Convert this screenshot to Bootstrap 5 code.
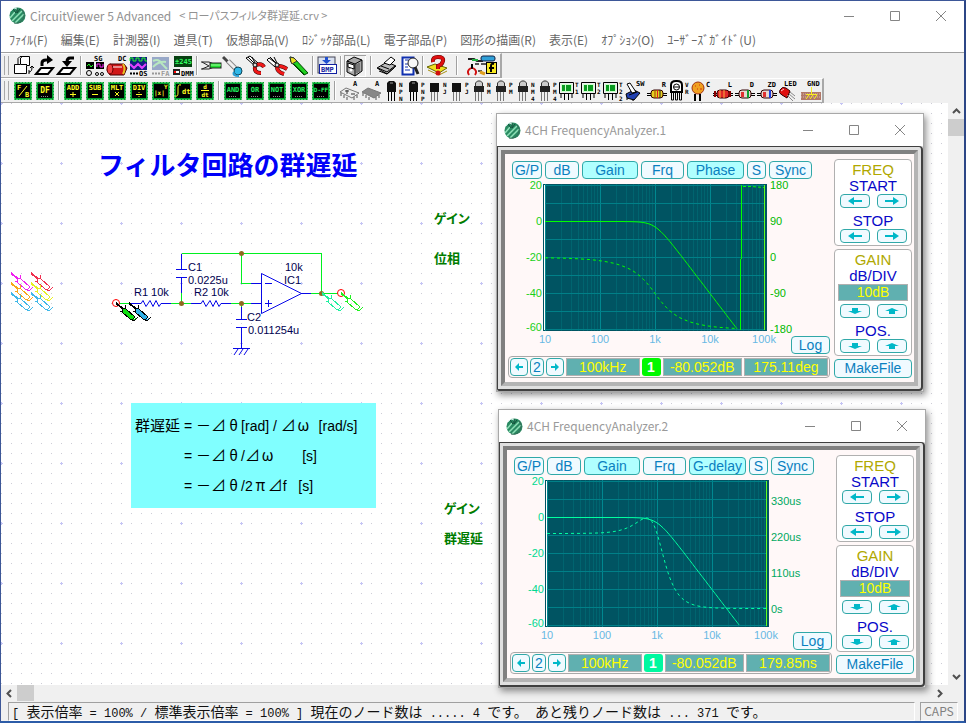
<!DOCTYPE html>
<html lang="ja">
<head>
<meta charset="utf-8">
<meta name="viewport" content="width=device-width, initial-scale=1">
<title>CircuitViewer 5 Advanced</title>
<link href="https://cdn.jsdelivr.net/npm/bootstrap@5.3.0/dist/css/bootstrap.min.css" rel="stylesheet">
<style>
body{font-family:"Noto Sans CJK JP",sans-serif;font-size:12px;line-height:1.3;background:#f0f0f0;border:1px solid #3d5798;border-right:2px solid #2c4686;border-bottom:2px solid #2c5ca8;overflow:hidden}
.title-bar{height:29px;background:#fff;color:#929292}
.jp-tight{font-feature-settings:"palt"}
.file-name{font-size:11px}
.menu-bar{height:23px;background:#fff;color:#666;border-bottom:1px solid #a0a0a0;gap:13px;padding-bottom:2px}
.menu-bar a{color:inherit;text-decoration:none;white-space:nowrap}
.win-ctl{width:46px;height:29px;border:0;background:none;border-radius:0;padding:0}
.win-ctl svg,.ana-ctl svg{display:block;margin:auto;stroke:#858585;fill:none}
.tool-row{height:25px;background:#f0f0f0;border-top:1px solid #fff;border-right:2px solid #a8a8a8;border-bottom:1px solid #a8a8a8;padding-left:3px}
.grip{width:5px;height:19px;border-left:1px solid #a8a8a8;border-right:1px solid #a8a8a8;margin-right:3px}
.tool-sep{height:19px;display:flex;justify-content:center;width:6px}
.tool-sep::before{content:"";border-left:1px solid #a0a0a0;border-right:1px solid #fff}
.sep-mid{width:10px}.sep-wide{width:18px}
.tool-btn{width:22px;height:22px;padding:0;border:0;border-radius:0;flex:none}
.tool-btn.wide-btn{width:34px}
.tool-btn.pressed{box-shadow:inset 1px 1px #a0a0a0,inset -1px -1px #fff}
.tool-btn svg{display:block;width:100%;height:22px}
.tool-btn text{font-family:"DejaVu Sans Mono",monospace;font-weight:700}
.sheet{background:#fff;min-height:0}
.sheet-art{position:absolute;left:0;top:0;width:100%;height:100%}
.sheet-art text{font-family:"Liberation Sans",sans-serif;font-size:11px;fill:#000050}
.free-item{position:absolute;white-space:nowrap;margin:0}
.sheet-title{left:97px;top:43px;font-size:26px;font-weight:700;line-height:36px;color:#0000f8}
.green-note{color:#007c00;font-weight:700;font-size:13px;line-height:18px}
.note-a{left:433px;top:106px}.note-b{left:433px;top:146px}.note-c{left:443px;top:396px}.note-d{left:443px;top:426px}
.formula{left:130px;top:300px;width:245px;padding:7px 4px 8px;background:#80ffff;color:#000;font-family:"Liberation Sans","Noto Sans CJK JP",sans-serif;font-size:14px;line-height:30px}
.formula p{display:grid;grid-template-columns:49px auto;height:30px;margin:0;white-space:pre}
.formula span{font-family:"Noto Sans CJK JP",sans-serif;font-size:15px}
.formula i{display:inline-block;width:15px;text-align:center;line-height:20px;font-style:normal}
.sb-v{width:16px;background:#f0f0f0}.sb-h{height:16px;background:#f0f0f0}
.sb-v button,.sb-h button{border:0;background:none;padding:0;width:16px;height:16px;display:flex;align-items:center;justify-content:center}
.thumb{width:17px;height:17px;background:#cdcdcd}
.status-row{height:20px;background:#f0f0f0;color:#111;padding:1px 6px 0 7px;gap:5px}
.status-cell{border:1px solid #a0a0a0;border-right-color:#fff;border-bottom-color:#fff;white-space:pre;overflow:hidden;line-height:16px}
.status-text{font-family:"Liberation Mono",monospace;font-size:12px;padding-left:3px}
.status-text span{font-family:"Noto Sans CJK JP",sans-serif;font-size:14px;line-height:16px}
.caps{width:38px;color:#808080;text-align:center}
/* analyzer windows */
.analyzer{position:absolute;z-index:2;width:428px;background:#e0e0e0;border:1px solid #a8a8a8;box-shadow:2px 3px 7px rgba(0,0,0,.45)}
.win-one{left:495px;top:10px}.win-two{left:497px;top:306px}
.ana-title{height:32px;background:#fff;color:#9a9a9a;padding-left:7px}
.ana-ctl{width:46px;border:0;background:none;padding:0}
.ana-frame{border:1px solid #404040;border-right-width:2px;border-bottom-width:2px;border-radius:0 4px 4px 2px;padding:3px}
.ana-face{border:4px solid;border-color:#808080 #b4b4b4 #b4b4b4 #808080;background:#fff8f8;padding:5px 2px 4px 3px;gap:4px;font-family:"Liberation Sans",sans-serif;font-size:14px}
.key{border:1px solid #30a8a8;border-radius:4px;background:#f0faff;color:#0a80c0;padding:0;height:18px;line-height:16px;text-align:center;font-family:"Liberation Sans",sans-serif;font-size:14px}
.key:hover{background:#dff6ff}
.key.on-key{background:#b0ffff}
.k-gp{width:30px}.k-db{width:34px}.k-gain{width:56px}.k-frq{width:43px}.k-phase{width:57px}.k-s{width:19px}.k-sync{width:43px}
.tabs-row{padding:2px 0 0 4px;gap:3px}
.plot-grid{display:grid}
.plot-grid>*{grid-area:1/1}
.plot-grid svg{width:100%;height:176px;display:block}
.plot-grid text{font-family:"Liberation Sans",sans-serif;font-size:11px}
.x-ticks text{fill:#68b8e4;text-anchor:middle}
.l-ticks text{text-anchor:end}
.log-key{width:39px;margin-bottom:1px;z-index:1}
.read-bar{border:1px solid #a8a8a8;border-radius:4px;padding:1px;height:22px;gap:2px;background:#fff8f8}
.nav-key{width:18px}.num-key{width:14px}
.nav-key svg{display:block;margin:auto}
.readout{background:#60b0b0;color:#ffff00;border:1px solid #b0b0b0;text-align:center;line-height:17px;height:18px}
.r-freq{flex:74 1 0}.r-lvl{flex:80 1 0}.r-val{flex:85 1 0}
.ch-mark{width:19px;height:18px;border-radius:3px;color:#fff;font-weight:700;text-align:center;line-height:18px;border:0;padding:0}
.bg-one{background:#00f800}.bg-two{background:#00f8a0}
.side-col{width:78px;gap:3px}
.side-box{border:1px solid #b0b0b0;border-radius:4px;background:#fff;text-align:center;font-size:15px;line-height:17px;padding:1px 3px 2px}
.side-box .lbl{color:#0808c8;line-height:16px}
.side-box .hd{color:#b0a800}
.side-box .key{width:30px;height:14px;display:flex;align-items:center;justify-content:center}
.side-box .readout{line-height:15px;font-size:14px;height:17px}
.pair{gap:7px}
.gap-a{margin-top:5px}.gap-b{margin-top:3px}
.make-key{height:19px;line-height:17px}
</style>
<script src="https://cdn.jsdelivr.net/npm/bootstrap@5.3.0/dist/js/bootstrap.bundle.min.js"></script>
</head>
<body class="vh-100 d-flex flex-column">
<svg width="0" height="0" class="position-absolute" aria-hidden="true">
<defs>
<symbol id="logo" viewBox="0 0 17 17"><circle cx="8.500" cy="8.500" r="8" fill="#2a8a62"/><path d="M1 11L6 5M3 14L13 4M6 16L15 7" stroke="#8fe0b8" stroke-width="1.500"/><path d="M4 2l3 4M8 1v5l3-4" stroke="#124c38" fill="none"/><path d="M13 3A8 8 0 0 1 5 16" stroke="#356b58" fill="none"/><path d="M2 4l3-3 3 1" stroke="#c8ece0" fill="none"/></symbol>
<symbol id="al" viewBox="0 0 14 8"><path d="M0 4L6 0V3H14V5H6V8Z" fill="#00b8c8"/></symbol>
<symbol id="ar" viewBox="0 0 14 8"><path d="M14 4L8 0V3H0V5H8V8Z" fill="#00b8c8"/></symbol>
<symbol id="ad" viewBox="0 0 14 8"><path d="M4 1H10V4H14L7 7L0 4H4Z" fill="#00b8c8"/></symbol>
<symbol id="au" viewBox="0 0 14 8"><path d="M4 7H10V4H14L7 1L0 4H4Z" fill="#00b8c8"/></symbol>
<symbol id="sl" viewBox="0 0 8 8"><path d="M0 4L4 0V3H8V5H4V8Z" fill="#00b8c8"/></symbol>
<symbol id="sr" viewBox="0 0 8 8"><path d="M8 4L4 0V3H0V5H4V8Z" fill="#00b8c8"/></symbol>
<symbol id="probe" viewBox="0 0 22 18" overflow="visible"><path d="M0 0L7 6" stroke="currentColor" stroke-width="2"/><path d="M6 5L10 6L19 14L17 16L14 16L6 9ZM9 5L10 2M6 8L4 9M16 17h3l3-3" stroke="currentColor" stroke-width="1"/></symbol>
<symbol id="decade" viewBox="0 0 55 147" overflow="visible"><path d="M16.500 0V147M26.500 0V147M33.500 0V147M38.500 0V147M42.500 0V147M46.500 0V147M49.500 0V147M52.500 0V147" stroke="#00646f"/><path d="M.5 0V147" stroke="#008890" stroke-width="1"/></symbol>
<symbol id="scope" viewBox="0 0 322 176" overflow="visible"><rect x="35" y="5" width="224" height="147" fill="#005462"/><g shape-rendering="crispEdges"><use href="#decade" x="37" y="5" width="55" height="147"/><use href="#decade" x="92" y="5" width="55" height="147"/><use href="#decade" x="147" y="5" width="55" height="147"/><use href="#decade" x="202" y="5" width="55" height="147"/><path d="M37 6.500h220M37 24.500h220M37 42.500h220M37 60.500h220M37 78.500h220M37 96.500h220M37 114.500h220M37 132.500h220M37 150.500h220" stroke="#008088"/><path d="M36.500 6V151" stroke="#fff"/></g></symbol>
<symbol id="frame" viewBox="0 0 22 22"><rect x="2" y="2" width="18" height="18" fill="#00a030"/><rect x="2.500" y="2.500" width="17" height="17" fill="none" stroke="#a8f0a8" stroke-dasharray="1 2"/><rect x="4" y="4" width="14" height="14" fill="#000"/></symbol>
<pattern id="dots" width="60" height="60" patternUnits="userSpaceOnUse"><g shape-rendering="crispEdges"><path d="M0 .5H60M0 10.500H60M0 20.500H60M0 30.500H60M0 40.500H60M0 50.500H60" stroke="#ccccd6" stroke-dasharray="1 9"/><path d="M0 .5H2M.5 0V2M59 .5H60M.5 59V60" stroke="#c4c4f4"/></g></pattern>
</defs>
</svg>

<header class="title-bar d-flex align-items-center ps-2">
  <svg width="17" height="17" class="me-1"><use href="#logo"/></svg>
  <span>CircuitViewer 5 Advanced</span><span class="ms-2 jp-tight file-name">&lt; ローパスフィルタ群遅延.crv &gt;</span>
  <div class="ms-auto d-flex">
    <button class="win-ctl" aria-label="Minimize"><svg width="12" height="12"><path d="M1 6.500h10"/></svg></button>
    <button class="win-ctl" aria-label="Maximize"><svg width="12" height="12"><path d="M1.500 1.500h9v9h-9z"/></svg></button>
    <button class="win-ctl" aria-label="Close"><svg width="12" height="12"><path d="M1 1l10 10M11 1L1 11"/></svg></button>
  </div>
</header>
<nav class="menu-bar d-flex align-items-center px-2">
  <a href="#">ﾌｧｲﾙ(F)</a><a href="#">編集(E)</a><a href="#">計測器(I)</a><a href="#">道具(T)</a><a href="#">仮想部品(V)</a><a href="#">ﾛｼﾞｯｸ部品(L)</a><a href="#">電子部品(P)</a><a href="#">図形の描画(R)</a><a href="#">表示(E)</a><a href="#">ｵﾌﾟｼｮﾝ(O)</a><a href="#">ﾕｰｻﾞｰｽﾞｶﾞｲﾄﾞ(U)</a>
</nav>
<div><div class="tool-row d-inline-flex align-items-center align-top" id="rowMain" role="toolbar"><span class="grip"></span></div></div>
<div><div class="tool-row d-inline-flex align-items-center align-top" id="rowParts" role="toolbar"><span class="grip"></span></div></div>

<div class="d-flex flex-grow-1 sheet">
  <main class="position-relative flex-grow-1">
    <svg class="sheet-art" fill="none" aria-label="Circuit diagram">
      <rect width="100%" height="100%" fill="url(#dots)"/>
      <g transform="translate(-1 -103)">
        <path d="M181.500 253.500H321.500V293.500M241.500 253.500V283.500H251M181.500 293V303M119 303.500H131M171 303.500H191M231 303.500H251M241.500 303V307M311 293.500H338" stroke="#00f020" shape-rendering="crispEdges"/>
        <path d="M181.500 254V269M176 269.500h11M176 277.500h11M181.500 278V293M131 303.500h10l2-3 3 6 4-6 3 6 3-6 3 6 2-3H171M191 303.500h10l2-3 3 6 4-6 3 6 3-6 3 6 2-3H231M251 303.500h10M251 283.500h10M261.500 273.500V313.500L301.500 293.500ZM301 293.500h10M265 283.500h7M265 303.500h7M268.500 300v7M241.500 307V319M236 319.500h11M236 327.500h11M241.500 328V348M233 348.500h17M238 349l-4 6M243 349l-4 6M248 349l-4 6" stroke="#0808e8"/>
        <g fill="#906820"><circle cx="241.500" cy="253.500" r="2.500"/><circle cx="181.500" cy="303.500" r="2.500"/><circle cx="241.500" cy="303.500" r="2.500"/><circle cx="321.500" cy="293.500" r="2.500"/></g>
        <circle cx="116" cy="303" r="3.500" stroke="#f00"/><circle cx="341" cy="293" r="3.500" stroke="#f00"/>
        <text x="134" y="296">R1 10k</text><text x="194" y="296">R2 10k</text><text x="188" y="271">C1</text><text x="188" y="284">0.0225u</text><text x="285" y="271">10k</text><text x="284" y="284">IC1</text><text x="247" y="321">C2</text><text x="248" y="334">0.011254u</text>
        <g shape-rendering="crispEdges">
        <use href="#probe" x="11" y="273" width="22" height="18" color="#f020f0"/><use href="#probe" x="31" y="273" width="22" height="18" color="#f03050"/>
        <use href="#probe" x="11" y="283" width="22" height="18" color="#f8a818"/><use href="#probe" x="31" y="283" width="22" height="18" color="#e8f020"/>
        <use href="#probe" x="11" y="293" width="22" height="18" color="#40b8e8"/><use href="#probe" x="31" y="293" width="22" height="18" color="#40b8e8"/>
        <use href="#probe" x="116" y="303" width="22" height="18" color="#000" fill="#10e010"/><use href="#probe" x="129" y="303" width="22" height="18" color="#000" fill="#30b0e8"/>
        <use href="#probe" x="322" y="293" width="22" height="18" color="#20f0a0"/><use href="#probe" x="341" y="293" width="22" height="18" color="#20f020"/>
        </g>
      </g>
    </svg>
    <h1 class="free-item sheet-title">フィルタ回路の群遅延</h1>
    <p class="free-item green-note note-a jp-tight">ゲイン</p><p class="free-item green-note note-b">位相</p>
    <p class="free-item green-note note-c jp-tight">ゲイン</p><p class="free-item green-note note-d">群遅延</p>
    <div class="free-item formula">
      <p><span>群遅延</span><b class="fw-normal">= <span>－⊿<i>θ</i></span>[rad] / <span>⊿<i>ω</i></span>  [rad/s]</b></p>
      <p><span></span><b class="fw-normal">= <span>－⊿<i>θ</i></span>/<span>⊿<i>ω</i></span>       [s]</b></p>
      <p><span></span><b class="fw-normal">= <span>－⊿<i>θ</i></span>/2<span><i>π</i>⊿</span>f   [s]</b></p>
    </div>

    <section class="analyzer win-one">
      <div class="ana-title d-flex align-items-center"><svg width="17" height="17" class="me-1"><use href="#logo"/></svg><span>4CH FrequencyAnalyzer.1</span>
        <div class="ms-auto d-flex"><button class="ana-ctl" aria-label="Minimize"><svg width="12" height="12"><path d="M1 6.500h10"/></svg></button><button class="ana-ctl" aria-label="Maximize"><svg width="12" height="12"><path d="M1.500 1.500h9v9h-9z"/></svg></button><button class="ana-ctl" aria-label="Close"><svg width="12" height="12"><path d="M1 1l10 10M11 1L1 11"/></svg></button></div></div>
      <div class="ana-frame"><div class="ana-face d-flex">
        <div class="flex-grow-1 d-flex flex-column">
          <div class="d-flex tabs-row"><button class="key k-gp">G/P</button><button class="key k-db">dB</button><button class="key on-key k-gain">Gain</button><button class="key k-frq">Frq</button><button class="key on-key k-phase">Phase</button><button class="key k-s">S</button><button class="key k-sync">Sync</button></div>
          <div class="plot-grid">
            <svg viewBox="0 0 322 176" preserveAspectRatio="xMinYMin meet" aria-label="Gain and phase">
              <use href="#scope" width="322" height="176"/>
              <g fill="none" stroke="#00ff00"><path id="gain1"/><path id="phase1" stroke-dasharray="3 3"/><path d="M233.500 6V80M232.500 80V151"/><path d="M235 7.500h8l13 1" stroke-dasharray="3 2"/></g>
              <path d="M256.500 6V151" stroke="#60ff20"/>
              <g class="l-ticks" fill="#18d018"><text x="34" y="10">20</text><text x="34" y="46">0</text><text x="34" y="82">-20</text><text x="34" y="118">-40</text><text x="34" y="152">-60</text></g>
              <g fill="#00b800"><text x="262" y="10">180</text><text x="262" y="46">90</text><text x="262" y="82">0</text><text x="262" y="118">-90</text><text x="262" y="154">-180</text></g>
              <g class="x-ticks"><text x="37" y="164">10</text><text x="92" y="164">100</text><text x="147" y="164">1k</text><text x="202" y="164">10k</text><text x="256" y="164">100k</text></g>
            </svg>
            <button class="key log-key align-self-end ms-auto">Log</button>
          </div>
          <div class="read-bar d-flex mt-auto"><button class="key nav-key" aria-label="Previous"><svg width="8" height="8"><use href="#sl"/></svg></button><button class="key num-key">2</button><button class="key nav-key" aria-label="Next"><svg width="8" height="8"><use href="#sr"/></svg></button><output class="readout r-freq">100kHz</output><button class="ch-mark bg-one">1</button><output class="readout r-lvl">-80.052dB</output><output class="readout r-val">175.11deg</output></div>
        </div>
        <div class="side-col d-flex flex-column">
          <div class="side-box"><div class="hd">FREQ</div><div class="lbl">START</div><div class="d-flex justify-content-center pair"><button class="key" aria-label="Start down"><svg width="14" height="8"><use href="#al"/></svg></button><button class="key" aria-label="Start up"><svg width="14" height="8"><use href="#ar"/></svg></button></div><div class="lbl gap-a">STOP</div><div class="d-flex justify-content-center pair"><button class="key" aria-label="Stop down"><svg width="14" height="8"><use href="#al"/></svg></button><button class="key" aria-label="Stop up"><svg width="14" height="8"><use href="#ar"/></svg></button></div></div>
          <div class="side-box"><div class="hd">GAIN</div><div class="lbl">dB/DIV</div><output class="readout d-block">10dB</output><div class="d-flex justify-content-center pair gap-b"><button class="key" aria-label="Range down"><svg width="14" height="8"><use href="#ad"/></svg></button><button class="key" aria-label="Range up"><svg width="14" height="8"><use href="#au"/></svg></button></div><div class="lbl gap-a">POS.</div><div class="d-flex justify-content-center pair"><button class="key" aria-label="Position down"><svg width="14" height="8"><use href="#ad"/></svg></button><button class="key" aria-label="Position up"><svg width="14" height="8"><use href="#au"/></svg></button></div></div>
          <button class="key make-key">MakeFile</button>
        </div>
      </div></div>
    </section>

    <section class="analyzer win-two">
      <div class="ana-title d-flex align-items-center"><svg width="17" height="17" class="me-1"><use href="#logo"/></svg><span>4CH FrequencyAnalyzer.2</span>
        <div class="ms-auto d-flex"><button class="ana-ctl" aria-label="Minimize"><svg width="12" height="12"><path d="M1 6.500h10"/></svg></button><button class="ana-ctl" aria-label="Maximize"><svg width="12" height="12"><path d="M1.500 1.500h9v9h-9z"/></svg></button><button class="ana-ctl" aria-label="Close"><svg width="12" height="12"><path d="M1 1l10 10M11 1L1 11"/></svg></button></div></div>
      <div class="ana-frame"><div class="ana-face d-flex">
        <div class="flex-grow-1 d-flex flex-column">
          <div class="d-flex tabs-row"><button class="key k-gp">G/P</button><button class="key k-db">dB</button><button class="key on-key k-gain">Gain</button><button class="key k-frq">Frq</button><button class="key on-key k-phase">G-delay</button><button class="key k-s">S</button><button class="key k-sync">Sync</button></div>
          <div class="plot-grid">
            <svg viewBox="0 0 322 176" preserveAspectRatio="xMinYMin meet" aria-label="Gain and group delay">
              <use href="#scope" width="322" height="176"/>
              <g fill="none" stroke="#00ffa0"><path id="gain2"/><path id="delay2" stroke-dasharray="3 3"/></g>
              <path d="M256.500 6V151" stroke="#60ff20"/>
              <g class="l-ticks" fill="#00d890"><text x="34" y="10">20</text><text x="34" y="46">0</text><text x="34" y="82">-20</text><text x="34" y="118">-40</text><text x="34" y="152">-60</text></g>
              <g fill="#00a860"><text x="261" y="30">330us</text><text x="261" y="66">220us</text><text x="261" y="102">110us</text><text x="261" y="138">0s</text></g>
              <g class="x-ticks"><text x="37" y="164">10</text><text x="92" y="164">100</text><text x="147" y="164">1k</text><text x="202" y="164">10k</text><text x="256" y="164">100k</text></g>
            </svg>
            <button class="key log-key align-self-end ms-auto">Log</button>
          </div>
          <div class="read-bar d-flex mt-auto"><button class="key nav-key" aria-label="Previous"><svg width="8" height="8"><use href="#sl"/></svg></button><button class="key num-key">2</button><button class="key nav-key" aria-label="Next"><svg width="8" height="8"><use href="#sr"/></svg></button><output class="readout r-freq">100kHz</output><button class="ch-mark bg-two">1</button><output class="readout r-lvl">-80.052dB</output><output class="readout r-val">179.85ns</output></div>
        </div>
        <div class="side-col d-flex flex-column">
          <div class="side-box"><div class="hd">FREQ</div><div class="lbl">START</div><div class="d-flex justify-content-center pair"><button class="key" aria-label="Start down"><svg width="14" height="8"><use href="#al"/></svg></button><button class="key" aria-label="Start up"><svg width="14" height="8"><use href="#ar"/></svg></button></div><div class="lbl gap-a">STOP</div><div class="d-flex justify-content-center pair"><button class="key" aria-label="Stop down"><svg width="14" height="8"><use href="#al"/></svg></button><button class="key" aria-label="Stop up"><svg width="14" height="8"><use href="#ar"/></svg></button></div></div>
          <div class="side-box"><div class="hd">GAIN</div><div class="lbl">dB/DIV</div><output class="readout d-block">10dB</output><div class="d-flex justify-content-center pair gap-b"><button class="key" aria-label="Range down"><svg width="14" height="8"><use href="#ad"/></svg></button><button class="key" aria-label="Range up"><svg width="14" height="8"><use href="#au"/></svg></button></div><div class="lbl gap-a">POS.</div><div class="d-flex justify-content-center pair"><button class="key" aria-label="Position down"><svg width="14" height="8"><use href="#ad"/></svg></button><button class="key" aria-label="Position up"><svg width="14" height="8"><use href="#au"/></svg></button></div></div>
          <button class="key make-key">MakeFile</button>
        </div>
      </div></div>
    </section>
  </main>
  <div class="sb-v d-flex flex-column"><button aria-label="Scroll up"><svg width="9" height="6"><path d="M1 5L4.500 1.500L8 5" fill="none" stroke="#505050" stroke-width="2"/></svg></button><div class="thumb"></div><button class="mt-auto" aria-label="Scroll down"><svg width="9" height="6"><path d="M1 1L4.500 4.500L8 1" fill="none" stroke="#505050" stroke-width="2"/></svg></button></div>
</div>
<div class="sb-h d-flex pe-3"><button aria-label="Scroll left"><svg width="6" height="9"><path d="M5 1L1.500 4.500L5 8" fill="none" stroke="#505050" stroke-width="2"/></svg></button><div class="thumb"></div><button class="ms-auto" aria-label="Scroll right"><svg width="6" height="9"><path d="M1 1L4.500 4.500L1 8" fill="none" stroke="#505050" stroke-width="2"/></svg></button></div>
<footer class="status-row d-flex"><div class="status-cell status-text flex-grow-1">[ <span>表示倍率</span> = 100% / <span>標準表示倍率</span> = 100% ] <span>現在のノード数は</span> ..... 4 <span>です。</span> <span>あと残りノード数は</span> ... 371 <span>です。</span></div><div class="status-cell caps">CAPS</div></footer>

<script>
// Second-order Butterworth response of the filter, f0 = 1 kHz, 10 Hz to 100 kHz.
const trace = (fn, to) => {
  let d = '';
  for (let x = 0; x <= to; x++) {
    const u = Math.pow(10, x / 55 - 2);
    d += (x ? 'L' : 'M') + (x + 37) + ' ' + (fn(u) + .5).toFixed(1);
  }
  return d;
};
const gain = u => 42 + 18 * Math.log10(1 + u ** 4);
const phase = u => 78 + .4 * Math.atan2(Math.SQRT2 * u, 1 - u * u) * 180 / Math.PI;
const delay = u => 133 - 75 * (1 + u * u) / (1 + u ** 4);
const put = (id, d) => document.getElementById(id).setAttribute('d', d);
put('gain1', trace(gain, 192)); put('gain2', trace(gain, 192));
put('phase1', trace(phase, 192)); put('delay2', trace(delay, 219));

// Toolbar drawings, each on a 22 by 22 grid.
const K = 'stroke="#000" fill="none"';
const t = (x, y, s, c = '#000', z = 6) => `<text x="${x}" y="${y}" font-size="${z}" fill="${c}">${s}</text>`;
const vt = s => [...s].map((c, i) => t(17, 7 + i * 7, c, '#000', 6)).join('');
const base = '<use href="#frame" width="22" height="22"/>';
const mid = (s, c, y, z) => `<text x="11" y="${y}" font-size="${z}" fill="${c}" text-anchor="middle">${s}</text>`;
const Y = '#ffff20', G = '#20f060';
const math = (s, op) => base + mid(s, Y, 10, 7) + `<path d="${op}" stroke="${Y}" fill="none"/>`;
const gate = (s, z) => base + mid(s, G, 12, z) + '<path d="M7 16.500h8" stroke="#888" stroke-dasharray="1 1"/>';
const tr = s => `<path d="M5 3l2-2h5l2 2v9H5z" fill="#111"/><path d="M8 3h3" stroke="#999"/><path d="M6.500 12v9M9.500 12v9M12.500 12v9" ${K}/>` + vt(s);
const jf = s => `<path d="M4 3h9v9H4z" fill="#111"/><path d="M5.500 12v9M8.500 12v9M11.500 12v9" stroke="#777"/>` + vt(s);
const mos = s => `<path d="M4 6h10v6H4z" fill="#222"/><path d="M5.500 6V3l2-2h3l2 2v3" fill="#ccc" stroke="#333"/><path d="M5.500 12v9M8.500 12v9M11.500 12v9" stroke="#777"/>` + vt(s);
const trans = s => `<path d="M1.500 2.500h14v11h-14zM3 14v4M6.500 14v6M10.500 14v6M14 14v4" ${K}/><rect x="3" y="4" width="11" height="8" fill="#cfc"/><path d="M4 5h3v6H4zM8 5h5v6H8z" fill="#0a9a20"/>` + vt(s);
const chipA = (f, e) => `<path d="M2 12L8 8L21 13L14 18Z" fill="${f}" stroke="#777"/><path d="M3 13v3M6 15v3M9 17v3M16 17v3M19 15v3" stroke="#555"/>${e}` + t(15, 6, 'A', '#000', 7);
const axial = (f, s, bands) => `<path d="M1 13.500h20M1 15.500h20" stroke="#000"/><rect x="5" y="10" width="12" height="8" rx="3" fill="${f}" stroke="#300"/>${bands}<text x="20" y="7" font-size="7" text-anchor="end">${s}</text>`;
const cutter = (a, b) => `<path d="${a}" fill="#fff" stroke="#000"/><path d="M10 8L4 2M11 8L8 2" ${K}/><path d="${b}" fill="none" stroke="#300" stroke-width="4"/><path d="${b}" fill="none" stroke="#f01818" stroke-width="3"/><circle cx="11" cy="10" r="2" fill="#ddd" stroke="#000"/>`;

const main = [
 ['New', `<path d="M10.500 1.500h7v9h-3v8h-12V9.500h6V3z" fill="#fff" stroke="#000"/><path d="M9 9.500h6M6 9.500v-6l2-2h4M17 17q3 0 3-5M18 13l2-2 2 2M17 15v4" ${K}/>`],
 ['Open', `<path d="M2 19l5-6h12l-5 6z" fill="#fff" stroke="#000" stroke-width="2"/><path d="M8 11V8q0-3 4-3h3" stroke="#000" stroke-width="3" fill="none"/><path d="M13 0l6 5-6 4z"/>`],
 ['Save', `<path d="M2 19l5-6h12l-5 6z" fill="#fff" stroke="#000" stroke-width="2"/><path d="M18 3h-4q-3 0-3 4" stroke="#000" stroke-width="3" fill="none"/><path d="M6 6h10l-5 6z"/>`],
 '-',
 ['Signal generator', t(10, 6, 'SG', '#000', 7) + `<rect x="2" y="7" width="8" height="7"/><rect x="12" y="7" width="8" height="7"/><path d="M3 11l2-2 2 3 2-2" stroke="#2f2" fill="none"/><path d="M13 12V9h3v3h3V9" stroke="#f2f" fill="none"/><circle cx="5" cy="18" r="2.500" ${K}/><circle cx="13" cy="19" r="1.500" ${K}/><circle cx="18" cy="19" r="1.500" ${K}/>`],
 ['DC source', t(12, 6, 'DC', '#000', 7) + `<path d="M4 9h14l3 4-3 7H4L1 15z" fill="#d01818" stroke="#400"/><ellipse cx="4" cy="14" rx="3" ry="5" fill="#f04040" stroke="#600"/><path d="M7 12h9" stroke="#fff"/><path d="M17 9q3 5 0 10" stroke="#e8c020" stroke-width="2" fill="none"/>`],
 ['Oscilloscope', `<rect x="2" y="2" width="17" height="13" fill="#102080"/><path d="M2 6V3h3v3h3V3h3v3h3V3h3v3h2" stroke="#2f2" fill="none"/><path d="M2 9l4 4 4-4 4 4 4-4" stroke="#e040ff" fill="none" stroke-width="2"/><path d="M2 18.500h8" stroke="#000" stroke-width="2" stroke-dasharray="2 1"/>` + t(11, 21, 'OS', '#000', 7)],
 ['Frequency analyzer', `<rect x="2" y="2" width="17" height="13" fill="#98a8c8"/><path d="M3 6q6-3 9 3l5 5M3 12q6-6 13-5" stroke="#b8e8c0" fill="none" stroke-width="2"/><path d="M2 18.500h8" stroke="#999" stroke-width="2" stroke-dasharray="2 1"/>` + t(11, 21, 'FA', '#999', 7)],
 ['Multimeter', `<rect x="2" y="1" width="18" height="11" fill="#064010"/>` + t(3, 9, '±245', '#30ff60', 7) + `<path d="M1 14h7v6H1z" fill="#222"/><path d="M2 16h2v2H2z" fill="#f00"/><path d="M4 16h3v2H4z" fill="#fff"/>` + t(9, 21, 'DMM', '#000', 7)],
 '-',
 ['Wire', `<path d="M1 7h8l5 2M1 14h8l5-2M2 7l7 4-7 3" stroke="#222" fill="none"/><rect x="10" y="8" width="11" height="5" fill="#20e030" stroke="#222"/><path d="M11 10h10" stroke="#a0ffa0"/>`],
 ['Solder', `<path d="M1 2l11 11" stroke="#444" stroke-width="3"/><path d="M6 6l9 9" stroke="#888" stroke-width="5"/><path d="M6 6l9 9" stroke="#eee" stroke-width="3"/><circle cx="16" cy="16" r="4" fill="#30b8e8" stroke="#145"/><path d="M12 17q-2 4 5 4" stroke="#28a0d8" fill="none" stroke-width="2"/>`],
 ['Cutter', cutter('M2 3l4-2 8 7-3 3z', 'M12 10q6-2 8 2M11 12q-1 6 6 6')],
 ['Nipper', cutter('M1 5l2-2 8 6-2 3z', 'M13 11q3 0 8 3M11 12q0 5 7 7')],
 ['Pencil', `<path d="M2 2l4 1 14 15-4 2L3 7z" fill="#20d020" stroke="#040"/><path d="M2 2l4 1 3 3-5 3-1-2z" fill="#e8e020" stroke="#333"/><path d="M6 9l11 11" stroke="#060"/>`],
 '-',
 ['Save BMP', `<rect x="2" y="2" width="17" height="16" fill="#d8e0f0" stroke="#445"/><path d="M9 2h3v3h3l-4.500 4L6 5h3z" fill="#2050d0"/><rect x="3.500" y="9.500" width="17" height="9" fill="#fff" stroke="#1020a0"/>` + t(5, 17, 'BMP', '#1020a0', 7)],
 '-',
 ['3D view', `<path d="M3 6l7-4 8 3v11l-7 5-8-4z" fill="#aaa" stroke="#000"/><path d="M3 6l8 3 7-4M11 9v12" ${K}/><path d="M13 9v9M15 8v9" stroke="#444"/><path d="M4 8l6 2v4l-6-2z" fill="#fff" stroke="#000"/><circle cx="7" cy="15" r="1.500" fill="#fff"/>`, 'pressed'],
 '-mid',
 ['Print', `<path d="M1 13l10-6 9 4-9 8z" fill="#bbb" stroke="#000"/><path d="M8 8l7-6 4 3-5 5z" fill="#fff" stroke="#000"/><path d="M2 13l9 4 8-6M5 11l8 3M3 16l8 3 7-6" ${K}/>`],
 ['Preview', `<path d="M4.500 2.500h11v17h-11z" fill="#fff" stroke="#1030b0" stroke-width="2"/><path d="M7 5h4M7 9h3M7 12h3M7 15h5" stroke="#1030b0"/><circle cx="15" cy="8" r="5" fill="#f8f8f8" stroke="#222"/><path d="M17 12l3 7" stroke="#222" stroke-width="3"/>`],
 '-',
 ['Help', `<path d="M1 12l8-3 12 4-8 5z" fill="#f0e020" stroke="#660"/><path d="M2 15l11 5 8-4" fill="none" stroke="#a89010"/><path d="M7 7q-1-5 5-5t5 4-5 5v3" fill="none" stroke="#600" stroke-width="4"/><path d="M7 7q-1-5 5-5t5 4-5 5v3" fill="none" stroke="#e01010" stroke-width="3"/><circle cx="12" cy="18" r="2.500" fill="#d01010"/>`],
 '-wide',
 ['Toolbox', `<path d="M2 4h6l3 2h6" stroke="#222" stroke-width="2" fill="none"/><path d="M6 5h6" stroke="#20b040" stroke-width="2"/><rect x="15" y="1" width="14" height="5" rx="2" fill="#30a0d8" stroke="#124"/><path d="M6 9v5" stroke="#000" stroke-width="2"/><path d="M5 13q-5 3-2 7M7 13q5 3 2 7" stroke="#d01010" stroke-width="2" fill="none"/><path d="M9 8h4v2h-4zM15 8h5v2h-5zM12 15h4v2h-4z" fill="#555"/><path d="M14 17l5 2" stroke="#e0a020" stroke-width="3"/><rect x="20.500" y="7.500" width="10" height="11" fill="#f8e820" stroke="#000"/><path d="M28 9q-3-1-3 2v6M23 13h5" stroke="#000" fill="none" stroke-width="2"/>`, 'wide-btn']
];
const parts = [
 ['FB', base + t(5, 10, 'F', Y, 7) + t(13, 17, 'B', Y, 7) + `<path d="M7 16l8-10" stroke="${Y}"/>`], ['DF', base + mid('DF', Y, 13, 8) + '<path d="M7 16.500h8" stroke="#888" stroke-dasharray="1 1"/>'], '-',
 ['Add', math('ADD', 'M8 14.500h6M11 12v5')], ['Subtract', math('SUB', 'M8 14.500h6')], ['Multiply', math('MLT', 'M9 12l4 4M13 12l-4 4')], ['Divide', math('DIV', 'M8 14.500h6M11 12v1M11 16v1')],
 ['Power', base + t(4, 15, '|x|', Y, 6) + t(14, 9, 'Y', Y, 6)], ['Integrate', base + `<path d="M9 5q-3-1-3 3v5q0 4-3 3" stroke="${Y}" fill="none"/>` + t(10, 14, 'dt', Y, 7)], ['Differentiate', base + mid('d', Y, 9, 6) + mid('dt', Y, 17, 6) + `<path d="M7 10.500h8" stroke="${Y}"/>`], '-',
 ['AND', gate('AND', 7)], ['OR', gate('OR', 7)], ['NOT', gate('NOT', 7)], ['XOR', gate('XOR', 7)], ['D-FF', gate('D-FF', 6)], '-',
 ['Op-amp', chipA('#eee', '<path d="M7 11h4M9 10v4M13 14h4" stroke="#333"/>')], ['Comparator', chipA('#888', '')],
 ['NPN', tr('NPN')], ['PNP', tr('PNP')], ['NJ', jf('NJ')], ['PJ', jf('PJ')], ['NM', mos('NM')], ['PM', mos('PM')], ['NM4', mos('NM4')], ['PM4', mos('PM4')],
 ['T1', trans('T1')], ['T2', trans('T2')], ['T22', trans('T22')],
 ['Switch', `<path d="M2 14l8-4 6 3-6 7-7-2z" fill="#2040b0" stroke="#000"/><path d="M3 4l3-1 6 9-4 1z" fill="#fff" stroke="#000"/><path d="M5 15l8-3M9 19v2M3 18v2" ${K}/>` + t(12, 6, 'SW', '#000', 7)],
 ['Resistor', axial('#e8d020', 'R', '<path d="M9 10v8" stroke="#a04000"/><path d="M11.500 10v8" stroke="#e02020"/><path d="M14 10v8" stroke="#222"/>')],
 ['Variable resistor', `<path d="M3 5q0-4 5-4h1q5 0 5 4v7H3z" fill="#fff" stroke="#000" stroke-width="2"/><circle cx="8.500" cy="7" r="3" ${K}/><path d="M6 7h5M3.500 12v8h2v-8M7.500 12v8h2v-8M11.500 12v8h2v-8" ${K}/>` + vt('VR')],
 ['Capacitor', `<ellipse cx="8" cy="8" rx="6" ry="6" fill="#f0a020" stroke="#a03010"/><path d="M5 6h1M9 5h1M7 9h1M10 9h2" stroke="#d03010"/><path d="M5 14v7M10 14v7" stroke="#000" stroke-width="2"/>` + t(16, 7, 'C', '#000', 7)],
 ['Inductor', axial('#e02828', 'L', '<path d="M8 10v8M12 10v8" stroke="#f8b040"/><path d="M3 11v6M18 11v6" stroke="#800" stroke-width="2"/>')],
 ['Diode', axial('#e8d8d0', 'D', '<path d="M7 12h3v5H7z" fill="#e03030"/><path d="M14 10v8" stroke="#10a030" stroke-width="2"/>')],
 ['Zener diode', axial('#e8d8d0', 'ZD', '<path d="M7 12h3v5H7z" fill="#e03030"/><path d="M14 10v8" stroke="#2040e0" stroke-width="2"/>')],
 ['LED', t(6, 6, 'LED', '#000', 7) + `<path d="M2 10q2-4 6-2l4 3-3 7-5-3q-4-2-2-5z" fill="#e01010" stroke="#300"/><path d="M3 11l3-2" stroke="#fcc"/><path d="M9 15l6 6M11 14l6 5M12 12l5 4" stroke="#888" stroke-width="1"/>`],
 ['Ground', t(7, 6, 'GND', '#000', 7) + `<rect x="1" y="12" width="20" height="8" fill="#b07868"/><path d="M1 14h20M1 17h20" stroke="#d8b8b0" stroke-dasharray="1 1"/><path d="M11.500 7v7M6 14.500h11M9 15l-3 4M13 15l-3 4M17 15l-3 4" stroke="#f8f020"/>`]
];
const build = (id, list) => {
  const row = document.getElementById(id);
  for (const it of list) {
    if (typeof it === 'string') { row.insertAdjacentHTML('beforeend', `<span class="tool-sep ${it.length > 1 ? 'sep' + it : ''}"></span>`); continue; }
    row.insertAdjacentHTML('beforeend', `<button class="btn tool-btn ${it[2] || ''}" aria-label="${it[0]}"><svg>${it[1]}</svg></button>`);
  }
};
build('rowMain', main); build('rowParts', parts);
</script>
</body>
</html>
